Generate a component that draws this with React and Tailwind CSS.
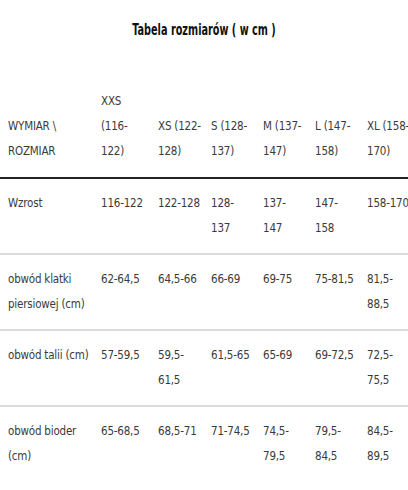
import React from 'react';

const font = { fontFamily: '"DejaVu Sans Condensed", "Liberation Sans", sans-serif' };

const header = [
  ['', 'WYMIAR \\', 'ROZMIAR'],
  ['XXS', '(116-', '122)'],
  ['', 'XS (122-', '128)'],
  ['', 'S (128-', '137)'],
  ['', 'M (137-', '147)'],
  ['', 'L (147-', '158)'],
  ['', 'XL (158-', '170)'],
];

const rows = [
  [['Wzrost'], ['116-122'], ['122-128'], ['128-', '137'], ['137-', '147'], ['147-', '158'], ['158-170']],
  [['obwód klatki', 'piersiowej (cm)'], ['62-64,5'], ['64,5-66'], ['66-69'], ['69-75'], ['75-81,5'], ['81,5-', '88,5']],
  [['obwód talii (cm)'], ['57-59,5'], ['59,5-', '61,5'], ['61,5-65'], ['65-69'], ['69-72,5'], ['72,5-', '75,5']],
  [['obwód bioder', '(cm)'], ['65-68,5'], ['68,5-71'], ['71-74,5'], ['74,5-', '79,5'], ['79,5-', '84,5'], ['84,5-', '89,5']],
];

const cols = 'grid grid-cols-[93px_57px_53px_52px_52px_52px_60px]';

const Cell = ({ lines }) => (
  <div className="pl-2 whitespace-nowrap">
    {lines.map((l, i) => (
      <div key={i} className="h-[25px]">{l || '\u00a0'}</div>
    ))}
  </div>
);

export default function App() {
  return (
    <div className="w-[408px] h-[490px] overflow-hidden bg-white text-[#3a3a3a]" style={font}>
      <h1 className="pt-[20px] text-center text-[15px] font-bold text-[#111] leading-[20px] scale-x-[0.72]">
        Tabela rozmiarów ( w cm )
      </h1>

      <div className="mt-[49px] w-[420px] text-[11.5px] tracking-[-0.2px] leading-[25px]">
        <div className={`${cols} pb-[13px] border-b-2 border-[#222]`}>
          {header.map((lines, i) => (
            <Cell key={i} lines={lines} />
          ))}
        </div>
        {rows.map((row, r) => (
          <div key={r} className={`${cols} pt-[12px] pb-[12px] h-[76px] border-b-2 border-[#dcdcdc] last:border-b-0`}>
            {row.map((lines, i) => (
              <Cell key={i} lines={lines} />
            ))}
          </div>
        ))}
      </div>
    </div>
  );
}
